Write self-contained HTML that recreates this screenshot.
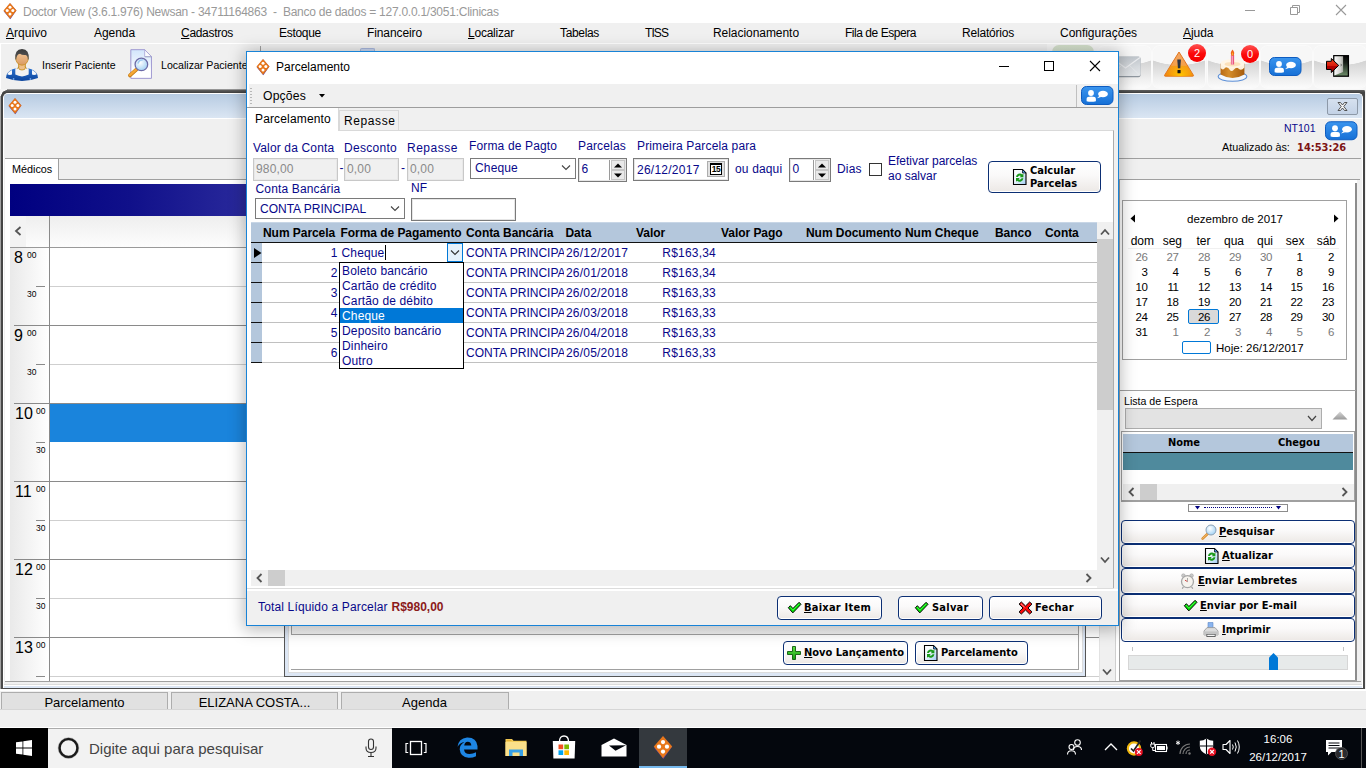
<!DOCTYPE html>
<html lang="pt-BR">
<head>
<meta charset="utf-8">
<title>Doctor View</title>
<style>
*{box-sizing:border-box;margin:0;padding:0}
html,body{width:1366px;height:768px;overflow:hidden;background:#f0f0f0}
body{font-family:"Liberation Sans",sans-serif;font-size:12px;color:#000;position:relative}
.a{position:absolute}
.t{position:absolute;white-space:nowrap;line-height:16px;height:16px}
.nv{color:#08088a}
.ar{font-family:"Liberation Sans",sans-serif;font-size:12px;letter-spacing:.15px}
.bd{font-family:"DejaVu Sans Condensed","DejaVu Sans",sans-serif;font-weight:700;font-size:11px}
svg{position:absolute;overflow:visible}
u{text-decoration:underline;text-underline-offset:1px}
/* buttons */
.btn{position:absolute;border:1px solid #0c2f74;border-radius:4px;background:linear-gradient(#ffffff 0%,#faf9f9 45%,#ece8e5 100%);box-shadow:inset 0 0 0 1px #fff}
.tbb{border-radius:7px;background:radial-gradient(ellipse 77% 46% at 50% 0,#f7f7f7 0,#f7f7f7 97%,rgba(247,247,247,0) 100%),linear-gradient(#f6f6f6 0,#f4f4f4 33%,#d4d4d4 36%,#dcdcdc 50%,#f0f0f0 80%,#fbfbfb 100%);box-shadow:0 0 0 1px #fafafa}
.btn .bd{position:absolute;white-space:nowrap;line-height:16px}
</style>
</head>
<body>
<!--DEFS-START-->
<svg width="0" height="0" style="position:absolute;left:0;top:0">
<defs>
<linearGradient id="gOr" x1="0" y1="0" x2="0" y2="1"><stop offset="0" stop-color="#f6a452"/><stop offset="1" stop-color="#e36f12"/></linearGradient>
<linearGradient id="gBlue" x1="0" y1="0" x2="0" y2="1"><stop offset="0" stop-color="#3b95ee"/><stop offset="1" stop-color="#1670d6"/></linearGradient>
<linearGradient id="gGreen" x1="0" y1="0" x2="0" y2="1"><stop offset="0" stop-color="#5fe043"/><stop offset="1" stop-color="#14a012"/></linearGradient>
<linearGradient id="gRed" x1="0" y1="0" x2="0" y2="1"><stop offset="0" stop-color="#ff3a3a"/><stop offset="1" stop-color="#d40000"/></linearGradient>
<radialGradient id="gLens" cx=".4" cy=".35" r=".7"><stop offset="0" stop-color="#ffffff"/><stop offset="1" stop-color="#9fd0f4"/></radialGradient>
<linearGradient id="gSkin" x1="0" y1="0" x2="0" y2="1"><stop offset="0" stop-color="#f4c89a"/><stop offset="1" stop-color="#d99a62"/></linearGradient>
<linearGradient id="gRdoc" x1="0" y1="0" x2="1" y2="1"><stop offset="0" stop-color="#ffffff"/><stop offset=".45" stop-color="#eef6fc"/><stop offset="1" stop-color="#9ccbf0"/></linearGradient>
<linearGradient id="gTbtn" x1="0" y1="0" x2="0" y2="1"><stop offset="0" stop-color="#fafafa"/><stop offset=".45" stop-color="#f4f4f4"/><stop offset=".5" stop-color="#dedede"/><stop offset="1" stop-color="#fdfdfd"/></linearGradient>
<!-- app diamond icon 14x17 -->
<g id="ic-app"><path d="M7 0.300 L13.400 7.600 L7.300 16.300 L0.700 8.300Z" fill="#5b3fa0"/><path d="M7 0 L13.500 7.500 L7 15.800 L0.500 7.500Z" fill="#e8771a"/><circle cx="7" cy="4.300" r="1.500" fill="#fff"/><circle cx="4.200" cy="7.600" r="1.500" fill="#fff"/><circle cx="9.800" cy="7.600" r="1.500" fill="#fff"/><circle cx="7" cy="11" r="1.500" fill="#fff"/></g>
<!-- chat button 33x21 -->
<g id="ic-chat"><rect x="0.500" y="0.500" width="31.500" height="18" rx="5" fill="url(#gBlue)" stroke="#0e5cc0"/><circle cx="10" cy="7" r="2.900" fill="#fff"/><path d="M5.600 15.200 V13 Q5.600 10.600 10.200 10.600 Q14.900 10.600 14.900 13 V15.200 Q10.200 16.500 5.600 15.200Z" fill="#fff"/><ellipse cx="22" cy="8" rx="4.900" ry="3.300" fill="#fff"/><path d="M18.500 9.800 L16 12.200 L20.800 10.800Z" fill="#fff"/></g>
<!-- refresh doc 16x16 -->
<g id="ic-refresh"><path d="M1.500 0.500 H10.500 L14 4 V15.500 H1.500Z" fill="url(#gRdoc)" stroke="#000" stroke-width="1.100"/><path d="M10.500 0.500 V4 H14Z" fill="#4a9be8" stroke="#000" stroke-width=".7"/><path d="M4 8 A3.800 3.800 0 0 1 10.300 5.500 L11.400 4.400 V8.200 H7.600 L8.900 6.900 A2 2 0 0 0 5.900 8Z" fill="#1a9a1a"/><path d="M11.400 9.200 A3.800 3.800 0 0 1 5.100 11.700 L4 12.800 V9 H7.800 L6.500 10.300 A2 2 0 0 0 9.500 9.200Z" fill="#1a9a1a"/></g>
<!-- check 16x16 -->
<g id="ic-check"><path d="M2.300 7.700 L4.400 5.700 L6.900 8.500 L13.100 2.300 L15 4.300 L6.800 12.900Z" fill="#06e606" stroke="#0a0a0a" stroke-width="1" stroke-linejoin="round"/><path d="M4.300 7.200 L6.900 10.100 L13.100 3.900" fill="none" stroke="#5dff5d" stroke-width=".8" opacity=".8"/></g>
<!-- red X 16x16 -->
<g id="ic-x"><path d="M1 4.100 L3.400 2 L7.500 6 L11.600 2 L14 4.100 L10 8 L14 11.900 L11.600 14 L7.500 10 L3.400 14 L1 11.900 L5 8Z" fill="#fb0a0a" stroke="#0a0a0a" stroke-width="1" stroke-linejoin="round"/><path d="M3 3.800 L6.500 7.200" stroke="#ffb0b0" stroke-width=".9"/></g>
<!-- plus 16x16 -->
<g id="ic-plus"><path d="M6.500 1.500 H9.500 V6.500 H14.500 V9.500 H9.500 V14.500 H6.500 V9.500 H1.500 V6.500 H6.500Z" fill="url(#gGreen)" stroke="#0b5a0b" stroke-width=".9" stroke-linejoin="round"/></g>
<!-- magnifier 16x16 -->
<g id="ic-search"><path d="M7.2 9.2 L1.6 14.6" stroke="#d98a2b" stroke-width="2.6" stroke-linecap="round"/><path d="M7.2 9.2 L1.6 14.6" stroke="#f4c27a" stroke-width="1" stroke-linecap="round"/><circle cx="10" cy="6" r="5" fill="url(#gLens)" stroke="#8a9fb5" stroke-width="1"/></g>
<!-- clock 16x16 -->
<g id="ic-clock"><circle cx="3.4" cy="2.6" r="1.8" fill="#c9c9c9" stroke="#9a9a9a" stroke-width=".5"/><circle cx="11.6" cy="2.6" r="1.8" fill="#c9c9c9" stroke="#9a9a9a" stroke-width=".5"/><path d="M3.4 14 L2.2 15.6 M11.6 14 L12.8 15.6" stroke="#9a9a9a" stroke-width="1.2"/><circle cx="7.5" cy="8.6" r="6" fill="#f6f3ee" stroke="#a6a6a6" stroke-width="1.3"/><path d="M7.5 8.6 L5 7.2" stroke="#c33" stroke-width=".9"/><path d="M7.5 8.6 V5" stroke="#888" stroke-width=".7"/></g>
<!-- printer 16x16 -->
<g id="ic-print"><path d="M5 0.5 H10 V7 H5Z" fill="#8ab4ee" stroke="#5d86c8" stroke-width=".6"/><path d="M1 9 L4 5.6 H12 L15 9 V13 H1Z" fill="#dcdcdc" stroke="#8a8a8a" stroke-width=".7"/><path d="M1 9.4 H15 V13 H1Z" fill="#c4c4c4"/><path d="M3.5 12 H12.5 V15 H3.5Z" fill="#444"/><path d="M4.2 12.6 H11.8 V14.2 H4.2Z" fill="#f4f4f4"/></g>
</defs>
</svg>
<!--DEFS-END-->
<!-- ============ MAIN WINDOW CHROME ============ -->
<div class="a" id="titlebar" style="left:0;top:0;width:1366px;height:23px;background:#fff"></div>
<div class="t" style="left:23px;top:4px;color:#999;letter-spacing:-.25px">Doctor View (3.6.1.976) Newsan - 34711164863 &nbsp;- &nbsp;Banco de dados = 127.0.0.1/3051:Clinicas</div>
<div class="a" id="menubar" style="left:0;top:23px;width:1366px;height:20px;background:#f0f0f0"></div>
<div id="menu">
<div class="t" style="left:6px;top:25px;letter-spacing:0.04px"><u>A</u>rquivo</div>
<div class="t" style="left:94px;top:25px;letter-spacing:-0.06px">Agenda</div>
<div class="t" style="left:181px;top:25px;letter-spacing:-0.30px"><u>C</u>adastros</div>
<div class="t" style="left:279px;top:25px;letter-spacing:-0.29px">Estoque</div>
<div class="t" style="left:367px;top:25px;letter-spacing:-0.10px">Financeiro</div>
<div class="t" style="left:468px;top:25px;letter-spacing:-0.23px"><u>L</u>ocalizar</div>
<div class="t" style="left:560px;top:25px;letter-spacing:-0.34px">Tabelas</div>
<div class="t" style="left:645px;top:25px;letter-spacing:-.9px">TISS</div>
<div class="t" style="left:713px;top:25px;letter-spacing:-0.05px">Relacionamento</div>
<div class="t" style="left:845px;top:25px;letter-spacing:-0.46px">Fila de Espera</div>
<div class="t" style="left:962px;top:25px;letter-spacing:-0.20px">Relatórios</div>
<div class="t" style="left:1060px;top:25px;letter-spacing:-0.03px">Configurações</div>
<div class="t" style="left:1183px;top:25px;letter-spacing:-0.04px"><u>A</u>juda</div>
</div>
<div class="a" id="toolbar" style="left:0;top:43px;width:1366px;height:47px;background:#f0f0f0;border-top:1px solid #fff;border-left:1px solid #fff"></div>
<div class="t" style="left:42px;top:57px;font-size:10.6px">Inserir Paciente</div>
<div class="t" style="left:161px;top:57px;font-size:10.6px">Localizar Paciente</div>

<!-- ============ MDI CHILD ============ -->
<div class="a" id="mdi" style="left:0;top:89px;width:1365px;height:600px;background:linear-gradient(#b4b4b4 0,#5a5a5a 1.500px,#444 3.500px,#4a4a4a 100%);border-radius:3px 3px 0 0;border-left:1px solid #a2a2a2"></div>
<div class="a" style="left:3px;top:92.500px;width:1360px;height:595.500px;background:#f0f0f0;border-radius:5px 5px 0 0;border:1px solid #fff;border-bottom:none"></div>
<div class="a" id="mdititle" style="left:4px;top:93.500px;width:1358px;height:24px;background:linear-gradient(#b7cbe2,#dbe6f3);border-radius:4px 4px 0 0"></div>
<div class="a" style="left:4px;top:117.500px;width:1358px;height:1px;background:#fff"></div>
<div class="a" style="left:0;top:89px;width:7px;height:7px;background:radial-gradient(circle at 7px 7px,transparent 0,transparent 5.500px,#f4f4f4 6px);"></div>

<!--TB-START-->
<!-- title icon + caption buttons -->
<svg style="left:3px;top:2.5px" width="14" height="17"><use href="#ic-app"/></svg>
<svg style="left:1244px;top:4px" width="104" height="12" viewBox="0 0 104 12"><path d="M1 6.5 H11" stroke="#999" stroke-width="1"/><path d="M46.5 3.5 H53.500 V10.5 H46.5Z M48.5 3.5 V1.500 H55.5 V8.5 H53.5" fill="none" stroke="#999"/><path d="M92 1 L102 11 M102 1 L92 11" stroke="#999" stroke-width="1.1"/></svg>
<!-- toolbar: person icon -->
<svg style="left:5px;top:48px" width="34" height="34" viewBox="0 0 34 34">
<defs><linearGradient id="gHair" x1="0" y1="0" x2="0" y2="1"><stop offset="0" stop-color="#3a3a3a"/><stop offset="1" stop-color="#5c5c5c"/></linearGradient><linearGradient id="gOv" x1="0" y1="0" x2="0" y2="1"><stop offset="0" stop-color="#2d74d2"/><stop offset="1" stop-color="#0b449c"/></linearGradient></defs>
<path d="M1 30 Q0.800 24.500 7.500 21.300 L13 19.700 H21 L26.500 21.300 Q33.200 24.500 33 30 Q17 36 1 30Z" fill="url(#gOv)"/>
<path d="M2.300 26.200 Q3 23.800 7 21.900 V26.600 Q4.500 27.500 2.300 26.200Z M31.700 26.200 Q31 23.800 27 21.900 V26.600 Q29.500 27.500 31.700 26.200Z" fill="#f7f9fc"/>
<path d="M10.300 20.400 L13 19.700 H21 L23.700 20.400 V26.600 Q17 30.200 10.300 26.600Z" fill="#f2f2f2"/>
<circle cx="8.600" cy="31" r=".9" fill="#6fa4ea"/><circle cx="25.400" cy="31" r=".9" fill="#6fa4ea"/>
<path d="M13.600 15 H20.400 V19.800 Q20.400 22 17 22 Q13.600 22 13.600 19.800Z" fill="#eebf8a" stroke="#c48a14" stroke-width=".8"/>
<path d="M12.400 20.800 L14 18.600 M21.600 20.800 L20 18.600" stroke="#c48a14" stroke-width=".8"/>
<ellipse cx="17" cy="10.200" rx="6.300" ry="7" fill="url(#gSkin)" stroke="#c48a14" stroke-width=".7"/>
<path d="M10.300 11.500 Q9.300 1 17 1 Q24.700 1 23.700 11.500 L22.800 11.500 Q23 7.500 20.500 7 Q17 7.300 15 5.800 Q11.500 6.500 11.200 11.500Z" fill="url(#gHair)"/>
</svg>
<!-- toolbar: doc+magnifier -->
<svg style="left:127px;top:48.500px" width="27" height="31" viewBox="0 0 27 32">
<defs><linearGradient id="gDoc" x1="0" y1="0" x2="0" y2="1"><stop offset="0" stop-color="#d2e6fc"/><stop offset=".45" stop-color="#ecf3fd"/><stop offset=".7" stop-color="#ffffff"/><stop offset="1" stop-color="#ffffff"/></linearGradient></defs>
<path d="M3.500 0.700 H17.800 L24.800 7.800 V30.300 H3.500Z" fill="url(#gDoc)" stroke="#9c96cf" stroke-width="1"/>
<path d="M17.800 0.700 V7.800 H24.800Z" fill="#fbfcfe" stroke="#9c96cf" stroke-width=".7"/>
<path d="M18 8.200 H24.500" stroke="#9aa6b4" stroke-width=".9" opacity=".7"/>
<path d="M9.200 21.300 L2.600 27.300" stroke="#c27812" stroke-width="3.800" stroke-linecap="round"/>
<path d="M9.200 21 L2.600 27" stroke="#f5a733" stroke-width="2.600" stroke-linecap="round"/>
<circle cx="14.400" cy="15.900" r="6.500" fill="url(#gLens)" stroke="#6c6aa6" stroke-width="1.300"/>
<path d="M11 14.500 Q12 11.500 15.500 11.200" fill="none" stroke="#9ecbf2" stroke-width="1.600" stroke-linecap="round"/>
</svg>
<!-- toolbar separators / peeks -->
<div class="a" style="left:260px;top:46px;width:1px;height:6px;background:#a0a0a0"></div>
<div class="a" style="left:360px;top:48px;width:15px;height:4px;background:#c9d6ef;border:1px solid #a9b7dd;border-bottom:none;border-radius:2px 2px 0 0"></div>
<!-- toolbar: right glossy buttons -->
<div class="a" style="left:1047px;top:44px;width:319px;height:46px;background:#f6f6f6"></div>
<div class="a tbb" style="left:1052px;top:44.500px;width:42px;height:43px;background:linear-gradient(#d3dfca,#e9efe6);box-shadow:none"></div>
<div class="a tbb" style="left:1098px;top:46px;width:53px;height:42px"></div>
<div class="a tbb" style="left:1153px;top:46px;width:52px;height:42px"></div>
<div class="a tbb" style="left:1208px;top:46px;width:51px;height:42px"></div>
<div class="a tbb" style="left:1261px;top:46px;width:51px;height:42px"></div>
<div class="a tbb" style="left:1314px;top:46px;width:52px;height:42px"></div>
<!-- mail -->
<svg style="left:1110px;top:55.600px" width="31" height="22" viewBox="0 0 31 22"><defs><linearGradient id="gEnv" x1="0" y1="0" x2="0" y2="1"><stop offset="0" stop-color="#bfc5cb"/><stop offset=".5" stop-color="#d5d9dd"/><stop offset="1" stop-color="#e3e6e9"/></linearGradient></defs><rect x="0.500" y="0.800" width="30" height="20.500" rx="2" fill="#8f979f"/><rect x="0.500" y="0.500" width="30" height="19.500" rx="2" fill="url(#gEnv)"/><path d="M1 1.500 L15.500 12 L30 1.500" fill="none" stroke="#eef0f2" stroke-width="1.200" opacity=".9"/><path d="M1 19.500 L11.500 9.500 M30 19.500 L19.500 9.500" fill="none" stroke="#eef0f2" stroke-width=".8" opacity=".6"/></svg>
<!-- warning -->
<svg style="left:1163px;top:51px" width="32" height="27" viewBox="0 0 32 27">
<defs><linearGradient id="gWarn" x1="0" y1="0" x2="0" y2="1"><stop offset="0" stop-color="#f2a566"/><stop offset=".55" stop-color="#f4a04a"/><stop offset=".6" stop-color="#f59a18"/><stop offset="1" stop-color="#f28c0a"/></linearGradient><radialGradient id="gWarn2" cx=".55" cy=".95" r=".45"><stop offset="0" stop-color="#ffc400"/><stop offset="1" stop-color="#ffc400" stop-opacity="0"/></radialGradient></defs>
<path d="M16 1 L30.400 24.200 Q30.800 25.200 29.800 25.200 H2.200 Q1.200 25.200 1.600 24.200Z" fill="url(#gWarn)" stroke="#e2761e" stroke-width="1" stroke-linejoin="round"/>
<path d="M16 1 L30.400 24.200 Q30.800 25.200 29.800 25.200 H2.200 Q1.200 25.200 1.600 24.200Z" fill="url(#gWarn2)"/>
<path d="M14.300 8.500 H17.900 L17.300 17.300 H14.900Z" fill="#2b3440"/><rect x="14.500" y="19" width="3.100" height="3.300" rx=".5" fill="#0f1216"/>
</svg>
<div class="a" style="left:1188px;top:44px;width:18px;height:18px;border-radius:9px;background:linear-gradient(#ff5252,#fb0808 55%,#f40000)"></div>
<div class="t" style="left:1188px;top:45px;width:18px;text-align:center;color:#fff;font-size:11px">2</div>
<!-- cake -->
<svg style="left:1217px;top:49px" width="31" height="33" viewBox="0 0 31 33">
<defs><linearGradient id="gCake" x1="0" y1="0" x2="1" y2="0"><stop offset="0" stop-color="#b86a14"/><stop offset=".35" stop-color="#d58d2a"/><stop offset="1" stop-color="#a65c0e"/></linearGradient></defs>
<ellipse cx="15.500" cy="27.600" rx="14.300" ry="4.700" fill="#f2f7fd" stroke="#5d8fd6" stroke-width="1.100"/>
<path d="M3.600 14.500 V25.500 Q15.500 32.500 27.400 25.500 V14.500Z" fill="url(#gCake)"/>
<path d="M3.600 14.500 V19 Q5.500 21.500 7.500 19.500 Q10 16.500 12.500 20.500 Q14.500 23.500 17 20.500 Q19.500 17.500 22 20 Q24.500 22 27.400 18.500 V14.500Z" fill="#fdf1dc"/>
<ellipse cx="15.500" cy="14.500" rx="11.900" ry="4.200" fill="#fff6e6"/>
<ellipse cx="15.500" cy="15.200" rx="8" ry="2.300" fill="#fbd9a6" opacity=".7"/>
<rect x="13.900" y="6" width="3.200" height="9.500" fill="#e8557f"/><rect x="14.700" y="6" width="1" height="9.500" fill="#fbc0d2"/>
<path d="M15.500 0.500 Q18.500 3.800 16.300 6.800 H14.700 Q12.500 3.800 15.500 0.500Z" fill="#f0641a"/><path d="M15.500 3 Q16.600 5 15.500 6.500 Q14.400 5 15.500 3Z" fill="#fbc531"/>
</svg>
<div class="a" style="left:1241px;top:44.500px;width:18px;height:18px;border-radius:9px;background:linear-gradient(#ff5252,#fb0808 55%,#f40000)"></div>
<div class="t" style="left:1241px;top:45.500px;width:18px;text-align:center;color:#fff;font-size:11px">0</div>
<!-- chat -->
<svg style="left:1269px;top:56.500px" width="33" height="21"><use href="#ic-chat"/></svg>
<!-- exit -->
<svg style="left:1325px;top:55px" width="25" height="23" viewBox="0 0 25 23">
<defs><linearGradient id="gDoorBg" x1="0" y1="0" x2="0" y2="1"><stop offset="0" stop-color="#050505"/><stop offset=".35" stop-color="#1a211a"/><stop offset="1" stop-color="#6f8f6b"/></linearGradient><linearGradient id="gDoor" x1="0" y1="0" x2="1" y2="0"><stop offset="0" stop-color="#fafafa"/><stop offset=".7" stop-color="#d2d2ce"/><stop offset="1" stop-color="#a8aaa4"/></linearGradient><linearGradient id="gArr" x1="0" y1="0" x2="0" y2="1"><stop offset="0" stop-color="#f0481e"/><stop offset=".5" stop-color="#d81c0c"/><stop offset=".55" stop-color="#b40000"/><stop offset="1" stop-color="#a00000"/></linearGradient></defs>
<rect x="8.800" y="0.700" width="14.600" height="20.500" fill="url(#gDoorBg)" stroke="#000" stroke-width="1.300"/>
<path d="M9.400 1.300 H18.100 V17 L9.400 20.600Z" fill="url(#gDoor)"/>
<path d="M1.500 6.300 H6.300 V3.500 L13.700 10.400 L6.300 17.500 V14.500 H1.500Z" fill="url(#gArr)" stroke="#000" stroke-width="1" stroke-linejoin="miter"/>
<path d="M15.500 9.200 L16.700 10 L15.500 10.900" fill="none" stroke="#222" stroke-width=".6"/>
</svg>
<!-- MDI child title icon + close -->
<svg style="left:8px;top:98px" width="14" height="17"><use href="#ic-app"/></svg>
<div class="a" style="left:1327px;top:98px;width:31px;height:17px;border:1px solid #8d99a8;border-radius:2px;background:linear-gradient(#d6e1ef,#c3d2e6)"></div>
<svg style="left:1337px;top:102px" width="11" height="9" viewBox="0 0 11 9"><path d="M1 0.500 H3.500 L5.500 3 L7.500 0.500 H10 L6.800 4.500 L10 8.500 H7.500 L5.500 6 L3.500 8.500 H1 L4.200 4.500Z" fill="#f4f4f4" stroke="#444" stroke-width=".9"/></svg>
<svg style="left:1324.500px;top:120.500px" width="33" height="21" viewBox="0 0 33 20.500"><use href="#ic-chat"/></svg>
<!--TB-END-->
<!--MDI-START-->
<!-- info strip -->
<div class="a" style="left:5px;top:158px;width:1356px;height:1px;background:#a0a0a0"></div>
<div class="t nv" style="left:1284px;top:119.500px;font-size:10.500px">NT101</div>
<div class="t" style="left:1222px;top:139px;font-size:10.8px">Atualizado às:</div>
<div class="t" style="left:1297px;top:139.500px;font-size:11px;font-weight:700;color:#7d1414;font-family:'DejaVu Sans Condensed','DejaVu Sans',sans-serif">14:53:26</div>
<!-- Médicos tab -->
<div class="a" style="left:5px;top:179px;width:1114px;height:1px;background:#a0a0a0"></div>
<div class="a" style="left:5px;top:159px;width:54px;height:21px;background:#fff;border-right:1px solid #a0a0a0"></div>
<div class="t" style="left:12px;top:161px;font-size:10.8px">Médicos</div>
<!-- scheduler -->
<div class="a" id="sched" style="left:5px;top:180px;width:1114px;height:501px;background:#fff"></div>
<div class="a" style="left:10px;top:184px;width:1090px;height:32px;background:linear-gradient(90deg,#000080 0,#10108a 120px,#2a2a9c 240px,#6a7fd0 1090px)"></div>
<div class="a" style="left:10px;top:216px;width:1090px;height:32px;background:linear-gradient(#eeeeee,#fdfdfd);border-bottom:1px solid #9a9a9a"></div>
<div class="a" style="left:10px;top:216px;width:16px;height:31px;background:#f3f3f3"></div>
<svg style="left:14px;top:226px" width="8" height="10" viewBox="0 0 8 10"><path d="M6.5 1 L2 5 L6.5 9" fill="none" stroke="#555" stroke-width="1.8"/></svg>
<div class="a" style="left:10px;top:248px;width:39px;height:433px;background:linear-gradient(90deg,#e9e9e9,#ffffff)"></div>
<div class="a" style="left:49px;top:216px;width:1px;height:465px;background:#8a8a8a"></div>
<!-- hour lines -->
<div class="a" style="left:14px;top:325px;width:1086px;height:1px;background:#8a8a8a"></div>
<div class="a" style="left:14px;top:403px;width:1086px;height:1px;background:#8a8a8a"></div>
<div class="a" style="left:14px;top:481px;width:1086px;height:1px;background:#8a8a8a"></div>
<div class="a" style="left:14px;top:559px;width:1086px;height:1px;background:#8a8a8a"></div>
<div class="a" style="left:14px;top:637px;width:1086px;height:1px;background:#8a8a8a"></div>
<!-- half-hour lines -->
<div class="a" style="left:50px;top:286px;width:1050px;height:1px;background:#cfcfcf"></div>
<div class="a" style="left:50px;top:364px;width:1050px;height:1px;background:#cfcfcf"></div>
<div class="a" style="left:50px;top:520px;width:1050px;height:1px;background:#cfcfcf"></div>
<div class="a" style="left:50px;top:598px;width:1050px;height:1px;background:#cfcfcf"></div>
<div class="a" style="left:50px;top:676px;width:1050px;height:1px;background:#cfcfcf"></div>
<div class="a" style="left:36px;top:286px;width:9px;height:1px;background:#8a8a8a"></div>
<div class="a" style="left:36px;top:364px;width:9px;height:1px;background:#8a8a8a"></div>
<div class="a" style="left:36px;top:442px;width:9px;height:1px;background:#8a8a8a"></div>
<div class="a" style="left:36px;top:520px;width:9px;height:1px;background:#8a8a8a"></div>
<div class="a" style="left:36px;top:598px;width:9px;height:1px;background:#8a8a8a"></div>
<div class="a" style="left:36px;top:676px;width:9px;height:1px;background:#8a8a8a"></div>
<!-- selected slot -->
<div class="a" style="left:50px;top:404px;width:1050px;height:38px;background:#1a84dc"></div>
<!-- hour labels -->
<div class="t" style="left:14px;top:249px;font-size:16px;line-height:18px;height:18px">8</div>
<div class="t" style="left:14px;top:327px;font-size:16px;line-height:18px;height:18px">9</div>
<div class="t" style="left:15px;top:405px;font-size:16px;line-height:18px;height:18px">10</div>
<div class="t" style="left:15px;top:483px;font-size:16px;line-height:18px;height:18px">11</div>
<div class="t" style="left:15px;top:561px;font-size:16px;line-height:18px;height:18px">12</div>
<div class="t" style="left:15px;top:639px;font-size:16px;line-height:18px;height:18px">13</div>
<div class="t" style="left:27px;top:250px;font-size:8.5px;line-height:10px;height:10px">00</div>
<div class="t" style="left:27px;top:328px;font-size:8.5px;line-height:10px;height:10px">00</div>
<div class="t" style="left:36px;top:406px;font-size:8.5px;line-height:10px;height:10px">00</div>
<div class="t" style="left:36px;top:484px;font-size:8.5px;line-height:10px;height:10px">00</div>
<div class="t" style="left:36px;top:562px;font-size:8.5px;line-height:10px;height:10px">00</div>
<div class="t" style="left:36px;top:640px;font-size:8.5px;line-height:10px;height:10px">00</div>
<div class="t" style="left:27px;top:289px;font-size:8.5px;line-height:10px;height:10px">30</div>
<div class="t" style="left:27px;top:367px;font-size:8.5px;line-height:10px;height:10px">30</div>
<div class="t" style="left:36px;top:445px;font-size:8.5px;line-height:10px;height:10px">30</div>
<div class="t" style="left:36px;top:523px;font-size:8.5px;line-height:10px;height:10px">30</div>
<div class="t" style="left:36px;top:601px;font-size:8.5px;line-height:10px;height:10px">30</div>
<!-- scheduler v-scrollbar -->
<div class="a" style="left:1099px;top:216px;width:17px;height:465px;background:#f0f0f0;border-left:1px solid #e2e2e2;border-right:1px solid #cfcfcf"></div>
<svg style="left:1102px;top:668px" width="10" height="8" viewBox="0 0 10 8"><path d="M1 1.5 L5 6 L9 1.5" fill="none" stroke="#555" stroke-width="1.8"/></svg>
<!-- bottom panel (lançamentos) -->
<div class="a" style="left:284px;top:560px;width:802px;height:117px;background:#fff;border:1px solid #555"></div>
<div class="a" style="left:285px;top:561px;width:800px;height:115px;border:3px solid #dce6f4;border-right-width:2px"></div>
<div class="a" style="left:288px;top:564px;width:795px;height:109px;border:1px solid #dcdcdc"></div>
<div class="a" style="left:291px;top:570px;width:788px;height:100px;border:1px solid #a0a0a0;border-left:none;background:#fff"></div>
<div class="a" style="left:291px;top:570px;width:788px;height:65px;border:1px solid #a0a0a0;background:linear-gradient(#fff 80%,#f2f2f2)"></div>
<!-- MDI bottom strips -->
<div class="a" style="left:5px;top:681px;width:1356px;height:7px;background:#f0f0f0;border-top:1px solid #a0a0a0"></div>
<div class="a" style="left:4px;top:684px;width:1358px;height:1px;background:#dcdcdc"></div>
<div class="a" style="left:4px;top:685px;width:1358px;height:1px;background:#fff"></div>
<div class="a" style="left:4px;top:686px;width:1358px;height:2px;background:#dce6f4"></div>
<div class="btn" style="left:783px;top:641px;width:125px;height:24px"></div>
<svg style="left:786px;top:645px" width="16" height="16"><use href="#ic-plus"/></svg>
<div class="t bd" style="left:804px;top:645px;font-size:11px"><u>N</u>ovo Lançamento</div>
<div class="btn" style="left:915px;top:641px;width:113px;height:24px"></div>
<svg style="left:923px;top:645px" width="16" height="16"><use href="#ic-refresh"/></svg>
<div class="t bd" style="left:941px;top:645px;font-size:11px">Parcelamento</div>
<!--MDI-END-->
<!--RP-START-->
<div class="a" id="rpanel" style="left:1119px;top:179px;width:1242px;height:0"></div>
<div class="a" style="left:1119px;top:179px;width:241px;height:502px;background:#fff;border:1px solid #a0a0a0;border-right:none"></div>
<div class="a" style="left:1355px;top:183px;width:2px;height:497px;background:#8c8c8c"></div>
<div class="a" style="left:1357px;top:180px;width:4px;height:501px;background:#f0f0f0"></div>
<div class="a" style="left:1122px;top:200px;width:225px;height:160px;border:1px solid #a0a0a0;background:#fff"></div>
<div class="t" style="left:1122px;width:226px;text-align:center;top:211px;font-size:11.5px">dezembro de 2017</div>
<svg style="left:1130px;top:214px" width="6" height="9" viewBox="0 0 6 9"><path d="M5 0.5 L0.5 4.5 L5 8.5Z" fill="#000"/></svg>
<svg style="left:1333px;top:214px" width="6" height="9" viewBox="0 0 6 9"><path d="M1 0.5 L5.5 4.5 L1 8.5Z" fill="#000"/></svg>
<div class="t" style="left:1114px;width:40px;text-align:right;top:233px;font-size:12px">dom</div>
<div class="t" style="left:1142px;width:40px;text-align:right;top:233px;font-size:12px">seg</div>
<div class="t" style="left:1170.5px;width:40px;text-align:right;top:233px;font-size:12px">ter</div>
<div class="t" style="left:1204px;width:40px;text-align:right;top:233px;font-size:12px">qua</div>
<div class="t" style="left:1233px;width:40px;text-align:right;top:233px;font-size:12px">qui</div>
<div class="t" style="left:1264.5px;width:40px;text-align:right;top:233px;font-size:12px">sex</div>
<div class="t" style="left:1296px;width:40px;text-align:right;top:233px;font-size:12px">sáb</div>
<div class="a" style="left:1128px;top:248px;width:211px;height:1px;background:#f0f0f0"></div>
<div class="a" style="left:1188px;top:309px;width:31px;height:15px;background:#d9d9d9;border:1px solid #0078d7;border-radius:2px"></div>
<div class="t" style="left:1117.5px;width:30px;text-align:right;top:248.5px;font-size:11.5px;letter-spacing:-.45px;color:#7a7a7a">26</div>
<div class="t" style="left:1148.5px;width:30px;text-align:right;top:248.5px;font-size:11.5px;letter-spacing:-.45px;color:#7a7a7a">27</div>
<div class="t" style="left:1180px;width:30px;text-align:right;top:248.5px;font-size:11.5px;letter-spacing:-.45px;color:#7a7a7a">28</div>
<div class="t" style="left:1211px;width:30px;text-align:right;top:248.5px;font-size:11.5px;letter-spacing:-.45px;color:#7a7a7a">29</div>
<div class="t" style="left:1242px;width:30px;text-align:right;top:248.5px;font-size:11.5px;letter-spacing:-.45px;color:#7a7a7a">30</div>
<div class="t" style="left:1272.5px;width:30px;text-align:right;top:248.5px;font-size:11.5px;letter-spacing:-.45px;color:#000">1</div>
<div class="t" style="left:1304px;width:30px;text-align:right;top:248.5px;font-size:11.5px;letter-spacing:-.45px;color:#000">2</div>
<div class="t" style="left:1117.5px;width:30px;text-align:right;top:263.5px;font-size:11.5px;letter-spacing:-.45px;color:#000">3</div>
<div class="t" style="left:1148.5px;width:30px;text-align:right;top:263.5px;font-size:11.5px;letter-spacing:-.45px;color:#000">4</div>
<div class="t" style="left:1180px;width:30px;text-align:right;top:263.5px;font-size:11.5px;letter-spacing:-.45px;color:#000">5</div>
<div class="t" style="left:1211px;width:30px;text-align:right;top:263.5px;font-size:11.5px;letter-spacing:-.45px;color:#000">6</div>
<div class="t" style="left:1242px;width:30px;text-align:right;top:263.5px;font-size:11.5px;letter-spacing:-.45px;color:#000">7</div>
<div class="t" style="left:1272.5px;width:30px;text-align:right;top:263.5px;font-size:11.5px;letter-spacing:-.45px;color:#000">8</div>
<div class="t" style="left:1304px;width:30px;text-align:right;top:263.5px;font-size:11.5px;letter-spacing:-.45px;color:#000">9</div>
<div class="t" style="left:1117.5px;width:30px;text-align:right;top:278.5px;font-size:11.5px;letter-spacing:-.45px;color:#000">10</div>
<div class="t" style="left:1148.5px;width:30px;text-align:right;top:278.5px;font-size:11.5px;letter-spacing:-.45px;color:#000">11</div>
<div class="t" style="left:1180px;width:30px;text-align:right;top:278.5px;font-size:11.5px;letter-spacing:-.45px;color:#000">12</div>
<div class="t" style="left:1211px;width:30px;text-align:right;top:278.5px;font-size:11.5px;letter-spacing:-.45px;color:#000">13</div>
<div class="t" style="left:1242px;width:30px;text-align:right;top:278.5px;font-size:11.5px;letter-spacing:-.45px;color:#000">14</div>
<div class="t" style="left:1272.5px;width:30px;text-align:right;top:278.5px;font-size:11.5px;letter-spacing:-.45px;color:#000">15</div>
<div class="t" style="left:1304px;width:30px;text-align:right;top:278.5px;font-size:11.5px;letter-spacing:-.45px;color:#000">16</div>
<div class="t" style="left:1117.5px;width:30px;text-align:right;top:293.5px;font-size:11.5px;letter-spacing:-.45px;color:#000">17</div>
<div class="t" style="left:1148.5px;width:30px;text-align:right;top:293.5px;font-size:11.5px;letter-spacing:-.45px;color:#000">18</div>
<div class="t" style="left:1180px;width:30px;text-align:right;top:293.5px;font-size:11.5px;letter-spacing:-.45px;color:#000">19</div>
<div class="t" style="left:1211px;width:30px;text-align:right;top:293.5px;font-size:11.5px;letter-spacing:-.45px;color:#000">20</div>
<div class="t" style="left:1242px;width:30px;text-align:right;top:293.5px;font-size:11.5px;letter-spacing:-.45px;color:#000">21</div>
<div class="t" style="left:1272.5px;width:30px;text-align:right;top:293.5px;font-size:11.5px;letter-spacing:-.45px;color:#000">22</div>
<div class="t" style="left:1304px;width:30px;text-align:right;top:293.5px;font-size:11.5px;letter-spacing:-.45px;color:#000">23</div>
<div class="t" style="left:1117.5px;width:30px;text-align:right;top:308.5px;font-size:11.5px;letter-spacing:-.45px;color:#000">24</div>
<div class="t" style="left:1148.5px;width:30px;text-align:right;top:308.5px;font-size:11.5px;letter-spacing:-.45px;color:#000">25</div>
<div class="t" style="left:1180px;width:30px;text-align:right;top:308.5px;font-size:11.5px;letter-spacing:-.45px;color:#000">26</div>
<div class="t" style="left:1211px;width:30px;text-align:right;top:308.5px;font-size:11.5px;letter-spacing:-.45px;color:#000">27</div>
<div class="t" style="left:1242px;width:30px;text-align:right;top:308.5px;font-size:11.5px;letter-spacing:-.45px;color:#000">28</div>
<div class="t" style="left:1272.5px;width:30px;text-align:right;top:308.5px;font-size:11.5px;letter-spacing:-.45px;color:#000">29</div>
<div class="t" style="left:1304px;width:30px;text-align:right;top:308.5px;font-size:11.5px;letter-spacing:-.45px;color:#000">30</div>
<div class="t" style="left:1117.5px;width:30px;text-align:right;top:323.5px;font-size:11.5px;letter-spacing:-.45px;color:#000">31</div>
<div class="t" style="left:1148.5px;width:30px;text-align:right;top:323.5px;font-size:11.5px;letter-spacing:-.45px;color:#7a7a7a">1</div>
<div class="t" style="left:1180px;width:30px;text-align:right;top:323.5px;font-size:11.5px;letter-spacing:-.45px;color:#7a7a7a">2</div>
<div class="t" style="left:1211px;width:30px;text-align:right;top:323.5px;font-size:11.5px;letter-spacing:-.45px;color:#7a7a7a">3</div>
<div class="t" style="left:1242px;width:30px;text-align:right;top:323.5px;font-size:11.5px;letter-spacing:-.45px;color:#7a7a7a">4</div>
<div class="t" style="left:1272.5px;width:30px;text-align:right;top:323.5px;font-size:11.5px;letter-spacing:-.45px;color:#7a7a7a">5</div>
<div class="t" style="left:1304px;width:30px;text-align:right;top:323.5px;font-size:11.5px;letter-spacing:-.45px;color:#7a7a7a">6</div>
<div class="a" style="left:1182px;top:341px;width:29px;height:13px;border:1px solid #0078d7;border-radius:2px;background:#fff"></div>
<div class="t" style="left:1216px;top:339.5px;font-size:11.5px">Hoje: 26/12/2017</div>
<div class="a" style="left:1120px;top:390px;width:236px;height:1px;background:#a0a0a0"></div>
<div class="t" style="left:1124px;top:393px;font-size:10.6px">Lista de Espera</div>
<div class="a" style="left:1125px;top:408px;width:197px;height:21px;background:#e3e3e3;border:1px solid #adadad"></div>
<svg style="left:1307px;top:415px" width="10" height="7" viewBox="0 0 10 7"><path d="M1 1 L5 5.5 L9 1" fill="none" stroke="#444" stroke-width="1.2"/></svg>
<svg style="left:1332px;top:411px" width="16" height="9" viewBox="0 0 16 9"><defs><linearGradient id="tg" x1="0" y1="0" x2="0" y2="1"><stop offset="0" stop-color="#d8d8d8"/><stop offset="1" stop-color="#9a9a9a"/></linearGradient></defs><path d="M8 0.5 L15.5 8.5 L0.5 8.5Z" fill="url(#tg)"/></svg>
<div class="a" style="left:1121px;top:431px;width:234px;height:71px;border:1px solid #a0a0a0;border-bottom:2px solid #a0a0a0;background:#fff"></div>
<div class="a" style="left:1123px;top:434px;width:230px;height:18px;background:#b4c7dc"></div>
<div class="a" style="left:1123px;top:451.500px;width:230px;height:1.200px;background:#111"></div>
<div class="a" style="left:1123px;top:452.500px;width:230px;height:17.500px;background:#4f8a9d"></div>
<div class="t bd" style="left:1144px;width:80px;text-align:center;top:435px;font-size:11px">Nome</div>
<div class="t bd" style="left:1259px;width:80px;text-align:center;top:435px;font-size:11px">Chegou</div>
<div class="a" style="left:1123px;top:484px;width:231px;height:16px;background:#f0f0f0"></div>
<div class="a" style="left:1140px;top:484px;width:17px;height:16px;background:#cdcdcd"></div>
<svg style="left:1128px;top:487px" width="7" height="10" viewBox="0 0 7 10"><path d="M5.5 1 L1.5 5 L5.5 9" fill="none" stroke="#555" stroke-width="1.8"/></svg>
<svg style="left:1341px;top:487px" width="7" height="10" viewBox="0 0 7 10"><path d="M1.5 1 L5.5 5 L1.5 9" fill="none" stroke="#555" stroke-width="1.8"/></svg>
<div class="a" style="left:1188px;top:504px;width:100px;height:8px;border:1px solid #8c8c8c;background:#fff"></div>
<div class="a" style="left:1204px;top:507px;width:68px;height:0;border-top:1px dotted #000080"></div>
<svg style="left:1195px;top:506px" width="5" height="4" viewBox="0 0 5 4"><path d="M0 0 L5 0 L2.5 3.5Z" fill="#000080"/></svg>
<svg style="left:1276px;top:506px" width="5" height="4" viewBox="0 0 5 4"><path d="M0 0 L5 0 L2.5 3.5Z" fill="#000080"/></svg>
<div class="btn" style="left:1121px;top:520px;width:234px;height:24px"></div>
<div class="t bd" style="left:1219px;top:524.0px;font-size:11px;letter-spacing:.08px"><u>P</u>esquisar</div>
<svg style="left:1201px;top:524.0px" width="16" height="16"><use href="#ic-search"/></svg>
<div class="btn" style="left:1121px;top:544px;width:234px;height:24px"></div>
<div class="t bd" style="left:1222px;top:548.2px;font-size:11px;letter-spacing:.08px"><u>A</u>tualizar</div>
<svg style="left:1204px;top:548.200px" width="16" height="16"><use href="#ic-refresh"/></svg>
<div class="btn" style="left:1121px;top:568px;width:234px;height:26px"></div>
<div class="t bd" style="left:1198px;top:573.2px;font-size:11px;letter-spacing:.08px"><u>E</u>nviar Lembretes</div>
<svg style="left:1180px;top:573.2px" width="16" height="16"><use href="#ic-clock"/></svg>
<div class="btn" style="left:1121px;top:594px;width:234px;height:24px"></div>
<div class="t bd" style="left:1200px;top:598.2px;font-size:11px;letter-spacing:.08px"><u>E</u>nviar por E-mail</div>
<svg style="left:1182px;top:598.2px" width="16" height="16"><use href="#ic-check"/></svg>
<div class="btn" style="left:1121px;top:618px;width:234px;height:24px"></div>
<div class="t bd" style="left:1222px;top:622.2px;font-size:11px;letter-spacing:.08px"><u>I</u>mprimir</div>
<svg style="left:1203px;top:622.2px" width="16" height="16"><use href="#ic-print"/></svg>
<div class="a" style="left:1132px;top:647px;width:1px;height:4px;background:#c4c4c4"></div>
<div class="a" style="left:1343px;top:647px;width:1px;height:4px;background:#c4c4c4"></div>
<div class="a" style="left:1128px;top:655px;width:220px;height:15px;background:#e7eaea;border:1px solid #d6d6d6"></div>
<svg style="left:1269px;top:653px" width="9" height="17" viewBox="0 0 9 17"><path d="M0 4.5 L4.5 0 L9 4.5 L9 17 L0 17Z" fill="#0078d7"/></svg>
<!--RP-END-->

<!-- ============ BOTTOM TABS ============ -->
<div class="a" style="left:0;top:689px;width:1366px;height:2px;background:#fff"></div>
<div class="a" style="left:0;top:709px;width:1366px;height:1px;background:#d6d6d6"></div>
<div class="a" style="left:0;top:727px;width:1366px;height:1px;background:#fff"></div>
<div id="btabs">
<div class="a" style="left:1px;top:692px;width:167px;height:17px;background:#e1e1e1;border:1px solid #adadad;border-bottom:none"></div>
<div class="a" style="left:171px;top:692px;width:167px;height:17px;background:#e1e1e1;border:1px solid #adadad;border-bottom:none"></div>
<div class="a" style="left:341px;top:692px;width:168px;height:17px;background:#e1e1e1;border:1px solid #adadad;border-bottom:none"></div>
<div class="t" style="left:1px;width:167px;text-align:center;top:694.500px;font-size:13px">Parcelamento</div>
<div class="t" style="left:171px;width:167px;text-align:center;top:694.500px;font-size:13px">ELIZANA COSTA...</div>
<div class="t" style="left:341px;width:167px;text-align:center;top:694.500px;font-size:13px">Agenda</div>
</div>

<!-- ============ TASKBAR ============ -->
<div class="a" id="taskbar" style="left:0;top:728px;width:1366px;height:40px;background:#04070d"></div>
<div class="a" style="left:48px;top:728px;width:344px;height:40px;background:#f2f2f2;border-top:1px solid #ababab"></div>
<div class="t" style="left:89px;top:739px;font-size:15px;line-height:20px;height:20px;color:#444">Digite aqui para pesquisar</div>
<!--TK-START-->
<!-- start -->
<div class="a" style="left:0;top:728px;width:48px;height:40px;background:#000"></div>
<svg style="left:16px;top:740px" width="16" height="16" viewBox="0 0 16 16"><path d="M0 2.300 L6.500 1.400 V7.600 H0Z M7.300 1.300 L16 0 V7.600 H7.300Z M0 8.400 H6.500 V14.600 L0 13.700Z M7.300 8.400 H16 V16 L7.300 14.700Z" fill="#fff"/></svg>
<!-- cortana -->
<svg style="left:56.600px;top:735.800px" width="24" height="24" viewBox="0 0 24 24"><circle cx="11.500" cy="12" r="9" fill="none" stroke="#1a1a1a" stroke-width="2.600"/><circle cx="11.500" cy="12" r="10.400" fill="none" stroke="#8a8a8a" stroke-width=".6" opacity=".6"/></svg>
<!-- mic -->
<svg style="left:365px;top:738px" width="12" height="20" viewBox="0 0 12 20"><rect x="3.500" y="1" width="5" height="10.500" rx="2.500" fill="none" stroke="#333" stroke-width="1.100"/><path d="M1 8.500 V10 Q1 14.500 6 14.500 Q11 14.500 11 10 V8.500 M6 14.500 V18 M3 18.500 H9" fill="none" stroke="#333" stroke-width="1.100"/></svg>
<!-- task view -->
<svg style="left:405px;top:741px" width="22" height="14" viewBox="0 0 22 14"><rect x="5.500" y="0.500" width="11" height="13" fill="none" stroke="#fff" stroke-width="1.300"/><path d="M3.200 2.500 H1 V11.500 H3.200 M18.800 2.500 H21 V11.500 H18.800" fill="none" stroke="#fff" stroke-width="1.200"/></svg>
<!-- edge -->
<svg style="left:457px;top:737px" width="21" height="21" viewBox="0 0 21 21"><path d="M0.500 9.800 Q1.500 1.500 10 0.500 Q19.500 0.200 20.500 9 V12.500 H7 Q7.500 17 12.500 17 Q16 17 19 15.300 V19.300 Q15.500 21 11.500 20.800 Q3.500 20.200 2.700 12.500 Q2.500 7.500 7.500 5 Q3 5.500 0.500 9.800Z M7.200 8.600 H14.300 Q14.200 4.800 10.700 4.800 Q7.700 5 7.200 8.600Z" fill="#1e86e4" fill-rule="evenodd"/></svg>
<!-- folder -->
<svg style="left:505px;top:738px" width="22" height="19" viewBox="0 0 22 19"><path d="M0.500 1 H7 L8.500 2.800 H21.500 V18 H0.500Z" fill="#f5ce5a"/><path d="M0.500 4 H21.500 V18 H0.500Z" fill="#fbe08a"/><path d="M1.500 1.800 H6.500 V2.800 H1.500Z" fill="#e0a92c"/><path d="M4 11.500 H18 V18 H14.500 V14.500 H7.500 V18 H4Z" fill="#37a0e6"/></svg>
<!-- store -->
<svg style="left:552px;top:735px" width="24" height="24" viewBox="0 0 24 24"><path d="M7.500 6.500 Q7.500 1 12 1 Q16.500 1 16.500 6.500" fill="none" stroke="#fff" stroke-width="1.300"/><path d="M0.800 6 H23.200 L22.600 23.500 H1.400Z" fill="#fff"/><rect x="6.500" y="9.500" width="4.700" height="4.700" fill="#f25022"/><rect x="12.300" y="9.500" width="4.700" height="4.700" fill="#7fba00"/><rect x="6.500" y="15.300" width="4.700" height="4.700" fill="#00a4ef"/><rect x="12.300" y="15.300" width="4.700" height="4.700" fill="#ffb900"/></svg>
<!-- mail -->
<svg style="left:601px;top:738px" width="26" height="19" viewBox="0 0 26 19"><path d="M0.500 7 L13 0.500 L25.500 7 V18.500 H0.500Z" fill="#fff"/><path d="M8 7.500 L25 7.300 L14.500 12.800 L19.500 16.800Z" fill="#04070d"/></svg>
<!-- active app -->
<div class="a" style="left:639px;top:728px;width:48px;height:40px;background:#34393e"></div>
<div class="a" style="left:639px;top:766px;width:48px;height:2px;background:#76b9ed"></div>
<svg style="left:653px;top:736px" width="20" height="24" viewBox="0 0 14 17"><use href="#ic-app"/></svg>
<!-- tray -->
<svg style="left:1066px;top:738px" width="18" height="18" viewBox="0 0 18 18"><circle cx="11.500" cy="4.500" r="2.800" fill="none" stroke="#fff" stroke-width="1.100"/><path d="M7.500 12 Q7.500 8.500 11.500 8.500 Q15.500 8.500 15.500 12" fill="none" stroke="#fff" stroke-width="1.100"/><circle cx="5.500" cy="9" r="2.500" fill="none" stroke="#fff" stroke-width="1.100"/><path d="M1.500 16.500 Q1.500 12.700 5.500 12.700 Q9.500 12.700 9.500 16.500" fill="none" stroke="#fff" stroke-width="1.100"/></svg>
<svg style="left:1104px;top:743px" width="14" height="8" viewBox="0 0 14 8"><path d="M1 7 L7 1 L13 7" fill="none" stroke="#fff" stroke-width="1.300"/></svg>
<svg style="left:1126px;top:739px" width="18" height="18" viewBox="0 0 18 18"><circle cx="8" cy="9.500" r="7.200" fill="#f2b90f"/><circle cx="8" cy="9.500" r="5" fill="#fff"/><path d="M5 9.500 L7.500 12 L14.500 1.500" fill="none" stroke="#222" stroke-width="1.700"/><circle cx="12.800" cy="13" r="4" fill="#e81123"/><path d="M11 11.200 L14.600 14.800 M14.600 11.200 L11 14.800" stroke="#fff" stroke-width="1.200"/></svg>
<svg style="left:1150px;top:741px" width="18" height="13" viewBox="0 0 18 13"><rect x="5.500" y="3.500" width="11" height="7" fill="none" stroke="#fff" stroke-width="1.100"/><rect x="7" y="5" width="8" height="4" fill="#fff"/><path d="M17 5.500 V8.500" stroke="#fff" stroke-width="1.200"/><path d="M1.500 1 V3 M4 1 V3 M0.800 3 H4.700 V5.500 Q4.700 6.500 2.750 6.500 Q0.800 6.500 0.800 5.500Z M2.750 6.500 V9.500 H5" fill="none" stroke="#fff" stroke-width="1"/></svg>
<svg style="left:1175px;top:739px" width="17" height="17" viewBox="0 0 17 17"><path d="M3 1.500 V6 M1 2.600 L5 4.900 M5 2.600 L1 4.900" stroke="#fff" stroke-width=".9"/><path d="M5 15 A10 10 0 0 1 15 5" fill="none" stroke="#777" stroke-width="1.200"/><path d="M8 15 A7 7 0 0 1 15 8" fill="none" stroke="#777" stroke-width="1.200"/><path d="M11 15 A4 4 0 0 1 15 11" fill="none" stroke="#777" stroke-width="1.200"/><circle cx="14.500" cy="14.500" r="1.200" fill="#777"/></svg>
<svg style="left:1199px;top:738px" width="18" height="19" viewBox="0 0 18 19"><path d="M7.500 0.500 Q4.500 2.800 0.800 2.800 V8 Q0.800 13.500 7.500 16.500 Q14.200 13.500 14.200 8 V2.800 Q10.500 2.800 7.500 0.500Z" fill="#fff"/><path d="M7.500 0.500 V16.500 M0.800 8 H14.200" stroke="#04070d" stroke-width="1.100"/><circle cx="13" cy="13.800" r="4.200" fill="#e81123"/><path d="M11.200 12 L14.800 15.600 M14.800 12 L11.200 15.600" stroke="#fff" stroke-width="1.200"/></svg>
<svg style="left:1222px;top:739px" width="19" height="16" viewBox="0 0 19 16"><path d="M1 5.500 H4 L8 1.500 V14.500 L4 10.500 H1Z" fill="none" stroke="#fff" stroke-width="1.100" stroke-linejoin="round"/><path d="M10.500 5.500 Q12 8 10.500 10.500 M13 3.500 Q15.500 8 13 12.500 M15.500 1.500 Q19 8 15.500 14.500" fill="none" stroke="#fff" stroke-width="1"/></svg>
<div class="t" style="left:1248px;width:60px;text-align:center;top:730.500px;font-size:11.500px;color:#fff">16:06</div>
<div class="t" style="left:1248px;width:60px;text-align:center;top:748.500px;font-size:11.500px;color:#fff">26/12/2017</div>
<svg style="left:1325px;top:739px" width="24" height="22" viewBox="0 0 24 22"><path d="M1 1 H17 V13 H6.500 L3 16.500 V13 H1Z" fill="#fff"/><path d="M3.500 4 H14.500 M3.500 6.500 H14.500 M3.500 9 H14.500" stroke="#04070d" stroke-width="1"/><circle cx="16.500" cy="14.500" r="6" fill="#2a2a2e" stroke="#555" stroke-width=".8"/></svg>
<div class="t" style="left:1335.500px;top:745.500px;width:12px;text-align:center;color:#fff;font-size:11px">1</div>
<div class="a" style="left:1361px;top:728px;width:1px;height:40px;background:#555"></div>
<!--TK-END-->

<!-- ============ DIALOG ============ -->
<!--DLG-START-->
<div class="a" id="dlg" style="left:246px;top:51px;width:873px;height:575px;background:#f0f0f0;border:1px solid #1883d7;box-shadow:0 2px 15px 2px rgba(0,0,0,.27)"></div>
<div class="a" style="left:247px;top:52px;width:871px;height:32px;background:#fff"></div>
<div class="t" style="left:276px;top:59px;font-size:12px">Parcelamento</div>
<svg style="left:998px;top:61px" width="104" height="12" viewBox="0 0 104 12"><path d="M1 5.5 H11" stroke="#000" stroke-width="1"/><rect x="46.5" y="0.5" width="9" height="9" fill="none" stroke="#000"/><path d="M92 0 L102 10 M102 0 L92 10" stroke="#000" stroke-width="1.1"/></svg>
<div class="a" style="left:247px;top:107px;width:871px;height:1px;background:#9d9d9d"></div>
<div class="a" style="left:1076px;top:85px;width:1px;height:22px;background:#c0c0c0"></div>
<div class="a" style="left:250px;top:88px;width:2px;height:16px;background:repeating-linear-gradient(#b8b8b8 0 1px,transparent 1px 3px)"></div>
<div class="t" style="left:263px;top:87.500px;font-size:12.200px;letter-spacing:.15px">Opções</div>
<svg style="left:319px;top:94px" width="6" height="4" viewBox="0 0 6 4"><path d="M0 0 H6 L3 3.5Z" fill="#000"/></svg>
<svg style="left:1080.500px;top:86px" width="33" height="21"><use href="#ic-chat"/></svg>
<div class="a" style="left:339px;top:110px;width:60px;height:21px;background:#f0f0f0;border:1px solid #d9d9d9;border-bottom:none"></div>
<div class="a" style="left:247px;top:130px;width:867px;height:459px;background:#fff;border-top:1px solid #d9d9d9;border-right:1px solid #acacac"></div>
<div class="a" style="left:247px;top:108px;width:92px;height:23px;background:#fff;border-right:1px solid #d9d9d9"></div>
<div class="a" style="left:247px;top:84px;width:2px;height:23px;background:#fff"></div>
<div class="a" style="left:247px;top:589px;width:871px;height:1.500px;background:#fff"></div>
<div class="t ar" style="left:255px;top:111px;color:#000">Parcelamento</div>
<div class="t ar" style="left:344px;top:112.5px;color:#000;letter-spacing:.6px">Repasse</div>
<div class="t ar nv" style="left:253px;top:139.5px">Valor da Conta</div>
<div class="t ar nv" style="left:344px;top:139.500px;letter-spacing:.3px">Desconto</div>
<div class="t ar nv" style="left:407px;top:139.5px;letter-spacing:.5px">Repasse</div>
<div class="t ar nv" style="left:469px;top:138px">Forma de Pagto</div>
<div class="t ar nv" style="left:578px;top:138px">Parcelas</div>
<div class="t ar nv" style="left:637px;top:138px">Primeira Parcela para</div>
<div class="t ar nv" style="left:255.5px;top:180.5px">Conta Bancária</div>
<div class="t ar nv" style="left:411px;top:180px">NF</div>
<div class="t ar nv" style="left:735px;top:161px">ou daqui</div>
<div class="t ar nv" style="left:837px;top:161px">Dias</div>
<div class="t ar nv" style="left:888px;top:153px;letter-spacing:0">Efetivar parcelas</div>
<div class="t ar nv" style="left:888px;top:168px;letter-spacing:0">ao salvar</div>
<div class="t ar nv" style="left:339.5px;top:160px">-</div>
<div class="t ar nv" style="left:401px;top:160px">-</div>
<div class="a" style="left:253px;top:158px;width:85px;height:23px;background:#f0f0f0;border:1px solid #c8c8c8;box-shadow:inset 0 0 0 1px #e8e8e8"></div>
<div class="t ar" style="left:256px;top:161px;color:#8a8a8a">980,00</div>
<div class="a" style="left:344px;top:158px;width:55px;height:23px;background:#f0f0f0;border:1px solid #c8c8c8;box-shadow:inset 0 0 0 1px #e8e8e8"></div>
<div class="t ar" style="left:347px;top:161px;color:#8a8a8a">0,00</div>
<div class="a" style="left:407px;top:158px;width:57px;height:23px;background:#f0f0f0;border:1px solid #c8c8c8;box-shadow:inset 0 0 0 1px #e8e8e8"></div>
<div class="t ar" style="left:410px;top:161px;color:#8a8a8a">0,00</div>
<div class="a" style="left:469.500px;top:157.500px;width:106px;height:21.500px;background:#fff;border:1px solid #7a7a7a"></div>
<div class="t ar nv" style="left:475px;top:160px">Cheque</div>
<svg style="left:561px;top:165px" width="10" height="6" viewBox="0 0 10 6"><path d="M1 0.5 L5 4.5 L9 0.5" fill="none" stroke="#444" stroke-width="1.1"/></svg>
<div class="a" style="left:578px;top:158px;width:49px;height:24px;background:#fff;border:1px solid #7a7a7a;box-shadow:inset 0 0 0 1px #e6e6e6"></div>
<div class="t ar nv" style="left:581.5px;top:161px">6</div>
<div class="a" style="left:609px;top:160px;width:1px;height:20px;background:#9a9a9a"></div>
<div class="a" style="left:611px;top:160px;width:14px;height:10px;background:#e9e9e9;border:1px solid #c6c6c6"></div>
<div class="a" style="left:611px;top:170px;width:14px;height:10px;background:#e9e9e9;border:1px solid #c6c6c6"></div>
<svg style="left:614px;top:163px" width="8" height="15" viewBox="0 0 8 15"><path d="M0 4.5 L4 0.5 L8 4.5Z M0 10.5 L4 14.5 L8 10.5Z" fill="#000"/></svg>
<div class="a" style="left:789px;top:158px;width:42px;height:24px;background:#fff;border:1px solid #7a7a7a;box-shadow:inset 0 0 0 1px #e6e6e6"></div>
<div class="t ar nv" style="left:792.5px;top:161px">0</div>
<div class="a" style="left:813px;top:160px;width:1px;height:20px;background:#9a9a9a"></div>
<div class="a" style="left:815px;top:160px;width:14px;height:10px;background:#e9e9e9;border:1px solid #c6c6c6"></div>
<div class="a" style="left:815px;top:170px;width:14px;height:10px;background:#e9e9e9;border:1px solid #c6c6c6"></div>
<svg style="left:818px;top:163px" width="8" height="15" viewBox="0 0 8 15"><path d="M0 4.5 L4 0.5 L8 4.5Z M0 10.5 L4 14.5 L8 10.5Z" fill="#000"/></svg>
<div class="a" style="left:632.5px;top:158px;width:96px;height:23px;background:#fff;border:1px solid #7a7a7a;box-shadow:inset 0 0 0 1px #e6e6e6"></div>
<div class="t ar nv" style="left:637px;top:161.5px;letter-spacing:.25px">26/12/2017</div>
<div class="a" style="left:707px;top:161px;width:18px;height:16px;background:#e1e1e1;border:1px solid #adadad"></div>
<div class="a" style="left:710px;top:163px;width:12px;height:12px;border:1px solid #000;border-top:2px solid #000;background:#fff"></div>
<div class="t" style="left:710px;top:162px;width:12px;text-align:center;font-size:8.5px;font-weight:700;line-height:14px;height:14px;letter-spacing:-.6px">15</div>
<div class="a" style="left:869px;top:163px;width:13px;height:13px;background:#fff;border:1px solid #333"></div>
<div class="btn" style="left:988px;top:161px;width:113px;height:32px"></div>
<svg style="left:1012px;top:169px" width="16" height="16"><use href="#ic-refresh"/></svg>
<div class="t bd" style="left:1030px;top:164px;line-height:14px;height:14px">Calcular</div>
<div class="t bd" style="left:1030px;top:177px;line-height:14px;height:14px">Parcelas</div>
<div class="a" style="left:255px;top:198px;width:150px;height:21px;background:#fff;border:1px solid #7a7a7a"></div>
<div class="t ar nv" style="left:260px;top:200.5px;letter-spacing:0">CONTA PRINCIPAL</div>
<svg style="left:390px;top:205.5px" width="10" height="6" viewBox="0 0 10 6"><path d="M1 0.5 L5 4.5 L9 0.5" fill="none" stroke="#444" stroke-width="1.1"/></svg>
<div class="a" style="left:410.5px;top:198px;width:105px;height:22.5px;background:#fff;border:1px solid #7a7a7a;box-shadow:inset 0 0 0 1px #e6e6e6"></div>
<div class="a" style="left:251px;top:222px;width:846px;height:20px;background:#b4c7dc;border-top:1px solid #c8d6e6"></div>
<div class="a" style="left:251px;top:241.5px;width:846px;height:1.5px;background:#111"></div>
<div class="t" style="left:263px;top:224.5px;font-weight:700;font-size:12px;letter-spacing:-.05px">Num Parcela</div>
<div class="t" style="left:340.5px;top:224.5px;font-weight:700;font-size:12px;letter-spacing:-.05px">Forma de Pagamento</div>
<div class="t" style="left:466px;top:224.5px;font-weight:700;font-size:12px;letter-spacing:-.05px">Conta Bancária</div>
<div class="t" style="left:565.5px;top:224.5px;font-weight:700;font-size:12px;letter-spacing:-.05px">Data</div>
<div class="t" style="left:636px;top:224.5px;font-weight:700;font-size:12px;letter-spacing:-.05px">Valor</div>
<div class="t" style="left:721px;top:224.5px;font-weight:700;font-size:12px;letter-spacing:-.05px">Valor Pago</div>
<div class="t" style="left:806px;top:224.5px;font-weight:700;font-size:12px;letter-spacing:-.05px">Num Documento</div>
<div class="t" style="left:905px;top:224.5px;font-weight:700;font-size:12px;letter-spacing:-.05px">Num Cheque</div>
<div class="t" style="left:995px;top:224.5px;font-weight:700;font-size:12px;letter-spacing:-.05px">Banco</div>
<div class="t" style="left:1045px;top:224.5px;font-weight:700;font-size:12px;letter-spacing:-.05px">Conta</div>
<div class="a" style="left:251px;top:243px;width:11px;height:119px;background:#b4c7dc"></div>
<div class="a" style="left:262px;top:262px;width:835px;height:1px;background:#c0c0c0"></div>
<div class="a" style="left:251px;top:261.5px;width:11px;height:1.5px;background:#111"></div>
<div class="t ar nv" style="left:300px;width:37.5px;text-align:right;top:245px;letter-spacing:0">1</div>
<div class="t ar nv" style="left:466px;width:97.5px;overflow:hidden;top:245px;letter-spacing:0">CONTA PRINCIPAL</div>
<div class="t ar nv" style="left:566px;top:245px;letter-spacing:.2px">26/12/2017</div>
<div class="t ar nv" style="left:640px;width:76px;text-align:right;top:245px;letter-spacing:.2px">R$163,34</div>
<div class="a" style="left:262px;top:282px;width:835px;height:1px;background:#c0c0c0"></div>
<div class="a" style="left:251px;top:281.5px;width:11px;height:1.5px;background:#111"></div>
<div class="t ar nv" style="left:300px;width:37.5px;text-align:right;top:265px;letter-spacing:0">2</div>
<div class="t ar nv" style="left:466px;width:97.5px;overflow:hidden;top:265px;letter-spacing:0">CONTA PRINCIPAL</div>
<div class="t ar nv" style="left:566px;top:265px;letter-spacing:.2px">26/01/2018</div>
<div class="t ar nv" style="left:640px;width:76px;text-align:right;top:265px;letter-spacing:.2px">R$163,34</div>
<div class="a" style="left:262px;top:302px;width:835px;height:1px;background:#c0c0c0"></div>
<div class="a" style="left:251px;top:301.5px;width:11px;height:1.5px;background:#111"></div>
<div class="t ar nv" style="left:300px;width:37.5px;text-align:right;top:285px;letter-spacing:0">3</div>
<div class="t ar nv" style="left:466px;width:97.5px;overflow:hidden;top:285px;letter-spacing:0">CONTA PRINCIPAL</div>
<div class="t ar nv" style="left:566px;top:285px;letter-spacing:.2px">26/02/2018</div>
<div class="t ar nv" style="left:640px;width:76px;text-align:right;top:285px;letter-spacing:.2px">R$163,33</div>
<div class="a" style="left:262px;top:322px;width:835px;height:1px;background:#c0c0c0"></div>
<div class="a" style="left:251px;top:321.5px;width:11px;height:1.5px;background:#111"></div>
<div class="t ar nv" style="left:300px;width:37.5px;text-align:right;top:305px;letter-spacing:0">4</div>
<div class="t ar nv" style="left:466px;width:97.5px;overflow:hidden;top:305px;letter-spacing:0">CONTA PRINCIPAL</div>
<div class="t ar nv" style="left:566px;top:305px;letter-spacing:.2px">26/03/2018</div>
<div class="t ar nv" style="left:640px;width:76px;text-align:right;top:305px;letter-spacing:.2px">R$163,33</div>
<div class="a" style="left:262px;top:342px;width:835px;height:1px;background:#c0c0c0"></div>
<div class="a" style="left:251px;top:341.5px;width:11px;height:1.5px;background:#111"></div>
<div class="t ar nv" style="left:300px;width:37.5px;text-align:right;top:325px;letter-spacing:0">5</div>
<div class="t ar nv" style="left:466px;width:97.5px;overflow:hidden;top:325px;letter-spacing:0">CONTA PRINCIPAL</div>
<div class="t ar nv" style="left:566px;top:325px;letter-spacing:.2px">26/04/2018</div>
<div class="t ar nv" style="left:640px;width:76px;text-align:right;top:325px;letter-spacing:.2px">R$163,33</div>
<div class="a" style="left:262px;top:362px;width:835px;height:1px;background:#c0c0c0"></div>
<div class="a" style="left:251px;top:361.5px;width:11px;height:1.5px;background:#111"></div>
<div class="t ar nv" style="left:300px;width:37.5px;text-align:right;top:345px;letter-spacing:0">6</div>
<div class="t ar nv" style="left:466px;width:97.5px;overflow:hidden;top:345px;letter-spacing:0">CONTA PRINCIPAL</div>
<div class="t ar nv" style="left:566px;top:345px;letter-spacing:.2px">26/05/2018</div>
<div class="t ar nv" style="left:640px;width:76px;text-align:right;top:345px;letter-spacing:.2px">R$163,33</div>
<svg style="left:253.5px;top:247.5px" width="8" height="10" viewBox="0 0 8 10"><path d="M0 0 L7.5 5 L0 10Z" fill="#000"/></svg>
<div class="t ar nv" style="left:341.5px;top:245px">Cheque</div>
<div class="a" style="left:384.500px;top:245px;width:1px;height:15px;background:#000"></div>
<div class="a" style="left:447px;top:243px;width:16px;height:19px;background:#e5f1fb;border:1px solid #0078d7"></div>
<svg style="left:450px;top:250px" width="10" height="6" viewBox="0 0 10 6"><path d="M1 0.5 L5 4.5 L9 0.5" fill="none" stroke="#333" stroke-width="1.1"/></svg>
<div class="a" style="left:339px;top:262px;width:125px;height:107px;background:#fff;border:1px solid #000"></div>
<div class="a" style="left:340px;top:308px;width:123px;height:15px;background:#0078d7"></div>
<div class="t ar nv" style="left:342px;top:262.8px">Boleto bancário</div>
<div class="t ar nv" style="left:342px;top:277.8px">Cartão de crédito</div>
<div class="t ar nv" style="left:342px;top:292.8px">Cartão de débito</div>
<div class="t ar nv" style="left:342px;top:307.8px;color:#fff">Cheque</div>
<div class="t ar nv" style="left:342px;top:322.8px">Deposito bancário</div>
<div class="t ar nv" style="left:342px;top:337.8px">Dinheiro</div>
<div class="t ar nv" style="left:342px;top:352.8px">Outro</div>
<div class="a" style="left:1097px;top:222px;width:16px;height:366px;background:#f0f0f0"></div>
<div class="a" style="left:1097px;top:239px;width:16px;height:171px;background:#cdcdcd"></div>
<svg style="left:1100px;top:228px" width="10" height="8" viewBox="0 0 10 8"><path d="M1 6.5 L5 2 L9 6.5" fill="none" stroke="#555" stroke-width="1.8"/></svg>
<svg style="left:1100px;top:556px" width="10" height="8" viewBox="0 0 10 8"><path d="M1 1.5 L5 6 L9 1.5" fill="none" stroke="#555" stroke-width="1.8"/></svg>
<div class="a" style="left:251px;top:570px;width:846px;height:15.5px;background:#f0f0f0"></div>
<div class="a" style="left:268px;top:570px;width:17px;height:15.5px;background:#cdcdcd"></div>
<svg style="left:256px;top:573px" width="7" height="10" viewBox="0 0 7 10"><path d="M5.5 1 L1.5 5 L5.5 9" fill="none" stroke="#555" stroke-width="1.8"/></svg>
<svg style="left:1085px;top:573px" width="7" height="10" viewBox="0 0 7 10"><path d="M1.5 1 L5.5 5 L1.5 9" fill="none" stroke="#555" stroke-width="1.8"/></svg>
<div class="a" style="left:247px;top:588px;width:867px;height:1px;background:#dcdcdc"></div>
<div class="t ar nv" style="left:258px;top:598.5px">Total Líquido a Parcelar</div>
<div class="t" style="left:391.5px;top:598.5px;font-weight:700;color:#8b1a1a">R$980,00</div>
<div class="btn" style="left:777px;top:596px;width:105px;height:24px"></div>
<svg style="left:786px;top:600px" width="16" height="16"><use href="#ic-check"/></svg>
<div class="t bd" style="left:804px;top:600px;font-size:11px;letter-spacing:.23px"><u>B</u>aixar Item</div>
<div class="btn" style="left:898px;top:596px;width:85px;height:24px"></div>
<svg style="left:913px;top:600px" width="16" height="16"><use href="#ic-check"/></svg>
<div class="t bd" style="left:932px;top:600px;font-size:11px;letter-spacing:.23px">Salvar</div>
<div class="btn" style="left:989px;top:596px;width:113px;height:24px"></div>
<svg style="left:1018px;top:600px" width="16" height="16"><use href="#ic-x"/></svg>
<div class="t bd" style="left:1035px;top:600px;font-size:11px;letter-spacing:.23px">Fechar</div>
<svg style="left:256px;top:58.500px" width="14" height="17"><use href="#ic-app"/></svg>
<!--DLG-END-->
</body>
</html>
